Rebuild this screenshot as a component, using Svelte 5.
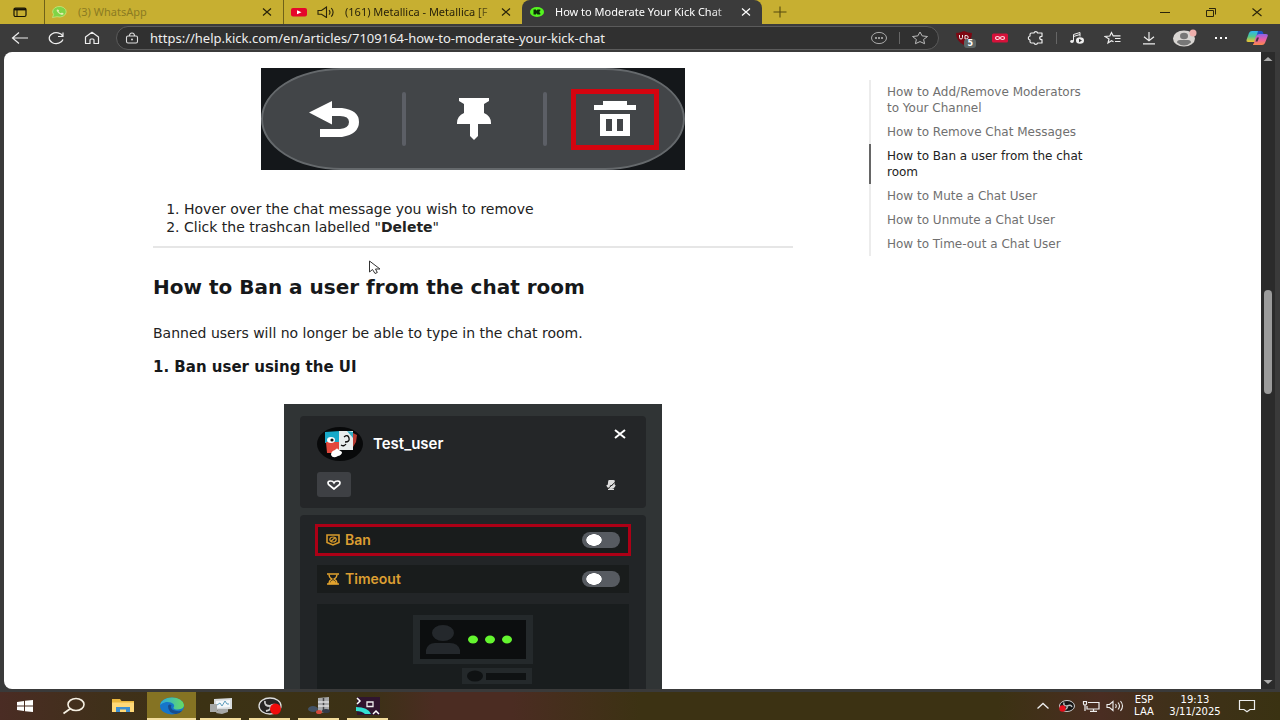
<script>
  const toc = [
    'How to Add/Remove Moderators to Your Channel',
    'How to Remove Chat Messages',
    'How to Ban a user from the chat room',
    'How to Mute a Chat User',
    'How to Unmute a Chat User',
    'How to Time-out a Chat User'
  ];
  const current = 2;
  let address = $state('https://help.kick.com/en/articles/7109164-how-to-moderate-your-kick-chat');
  let ban = $state(false);
  let timeout = $state(false);
</script>

{#snippet cross()}
  <svg width="10" height="8" viewBox="0 0 10 8"><path d="M1 .5 9 7.5M9 .5 1 7.5" fill="none" stroke="currentColor" stroke-width="1.2" /></svg>
{/snippet}

<div class="browser">
  <header>
    <div class="tabs">
      <button class="workspace" aria-label="Tab actions">
        <svg width="16" height="12" viewBox="0 0 16 12"><rect x="2" y="2" width="12" height="8.500" rx="1.500" fill="none" stroke="#171406" stroke-width="1.200" /><path d="M2 3.300h12" stroke="#171406" stroke-width="2.200" /><path d="M5 4v6" stroke="#171406" stroke-width="1" /></svg>
      </button>
      <div class="tab faded">
        <svg width="16" height="12" viewBox="0 0 16 12"><path d="M.5 11.500 1.600 8.500A6.800 5.300 0 1 1 5 10.700Z" fill="#7fd447" stroke="#c9e67c" stroke-width=".8" /><path d="M5 3.600c-1 .8.200 2.600 2 3.900 2 1.400 4 1.700 4.600.6.300-.8-1.600-1.600-2-1.300l-.7.500C7.800 7 7 6.200 6.600 5.500l.5-.7C7.400 4.400 6 3 5 3.600" fill="#e8efb4" /></svg>
        <span class="title">(3) WhatsApp</span>
        <button class="close" aria-label="Close WhatsApp">{@render cross()}</button>
      </div>
      <div class="tab">
        <svg width="16" height="12" viewBox="0 0 16 12"><rect y="2" width="16" height="8.500" rx="2" fill="#e5062b" /><path d="m6 4.300 4.500 2L6 8.300Z" fill="#fff" /></svg>
        <svg class="sound" width="18" height="12" viewBox="0 0 18 12"><path d="M1 4.500h3.500L9.500 1v10.500L4.500 8.300H1ZM12 4.200q2 2.200 0 4.400M14.300 2q3.600 4.300 0 8.600" fill="none" stroke="#29230a" stroke-width="1.100" /></svg>
        <span class="title fade">(161) Metallica - Metallica [F</span>
        <button class="close" aria-label="Close Metallica">{@render cross()}</button>
      </div>
      <div class="tab active">
        <svg width="16" height="12" viewBox="0 0 16 12"><ellipse cx="8" cy="6" rx="7" ry="5" fill="#55f51f" /><path d="M4.500 3.500h2.500v1.300l1.500-1.300h2.800V5L10 6l1.300 1v1.600H8.500L7 7.200v1.400H4.500Z" fill="#092b05" /></svg>
        <span class="title fade">How to Moderate Your Kick Chat</span>
        <button class="close" aria-label="Close Kick">{@render cross()}</button>
      </div>
      <button class="plus" aria-label="New tab">
        <svg width="14" height="12" viewBox="0 0 14 12"><path d="M7 .5v11M.5 6h13" stroke="#55490f" stroke-width="1.100" /></svg>
      </button>
      <div class="window">
        <button aria-label="Minimize"><svg width="12" height="10" viewBox="0 0 12 10"><path d="M1 5.500h10" stroke="#2b250b" /></svg></button>
        <button aria-label="Restore"><svg width="12" height="10" viewBox="0 0 12 10"><path d="M1.500 3.500h7v6h-7zM4 1.500h6.500v6" fill="none" stroke="#2b250b" /></svg></button>
        <button aria-label="Close"><svg width="12" height="10" viewBox="0 0 12 10"><path d="m1.500 1.500 9 7.500M10.500 1.500l-9 7.500" stroke="#2b250b" stroke-width="1.100" /></svg></button>
      </div>
    </div>

    <div class="toolbar">
      <button aria-label="Back"><svg width="18" height="14" viewBox="0 0 18 14"><path d="M17 7H2M8 1.500 1.500 7 8 12.500" fill="none" stroke="#eee" stroke-width="1.200" /></svg></button>
      <button aria-label="Reload"><svg width="18" height="14" viewBox="0 0 18 14"><path d="M15.800 5.300A7 5.400 0 1 0 16 8.500M16 1.500v4h-5" fill="none" stroke="#eee" stroke-width="1.200" /></svg></button>
      <button aria-label="Home"><svg width="18" height="14" viewBox="0 0 18 14"><path d="M2.500 6 9 1.300 15.500 6v6.500H11V9q0-1-1-1H8Q7 8 7 9v3.500H2.500Z" fill="none" stroke="#eee" stroke-width="1.200" stroke-linejoin="round" /></svg></button>
      <div class="address">
        <svg width="14" height="12" viewBox="0 0 14 12"><rect x="1.500" y="4" width="11" height="7" rx="1.500" fill="none" stroke="#ddd" stroke-width="1.100" /><path d="M4.500 4q0-3 2.500-3t2.500 3" fill="none" stroke="#ddd" stroke-width="1.100" /><circle cx="7" cy="7.500" r="1" fill="#ddd" /></svg>
        <input aria-label="Address" bind:value={address} />
        <button aria-label="Page info"><svg width="18" height="14" viewBox="0 0 18 14"><ellipse cx="9" cy="7" rx="7.500" ry="5.600" fill="none" stroke="#aaa" /><path d="M5 7h2M8 7h2M11 7h2" stroke="#bbb" stroke-width="1.500" /></svg></button>
        <i class="rule"></i>
        <button aria-label="Favorite"><svg width="18" height="14" viewBox="0 0 18 14"><path d="m9 1 2.200 3.900 5.300.6-3.900 3 1 4.200L9 10.600l-4.600 2.100 1-4.200-3.900-3 5.300-.6Z" fill="none" stroke="#bbb" stroke-linejoin="round" /></svg></button>
      </div>
      <div class="tools">
        <button aria-label="uBlock, 5 blocked" class="ublock"><svg width="18" height="14" viewBox="0 0 18 14"><path d="M9 0q3.500 2 8 2 0 8-8 12Q1 10 1 2q4.500 0 8-2" fill="#7d0712" /><path d="M4.500 4v2.500Q4.500 8 6 8t1.500-1.500V4M10 4.500h1.200q2 0 2 1.700t-2 1.800H10Z" fill="none" stroke="#eee" /></svg><b>5</b></button>
        <button aria-label="Recorder"><svg width="18" height="14" viewBox="0 0 18 14"><rect x="1" y="2.500" width="16" height="9" rx="1.500" fill="#d6113a" /><ellipse cx="6.500" cy="7" rx="2" ry="1.500" fill="none" stroke="#ffd9df" stroke-width="1.200" /><ellipse cx="11.500" cy="7" rx="2" ry="1.500" fill="none" stroke="#ffd9df" stroke-width="1.200" /></svg></button>
        <button aria-label="Extensions"><svg width="18" height="14" viewBox="0 0 18 14"><path d="M4.500 2H7q.3-1.300 1.800-1.300T10.600 2H15v3.300q-2.300 0-2.300 1.700T15 8.700V12h-4.400q-.3 1.300-1.800 1.300T7 12H4.500Q3 12 3 10.500V9Q1.300 8.600 1.300 7T3 5V3.500Q3 2 4.500 2" fill="none" stroke="#eee" stroke-width="1.200" stroke-linejoin="round" /></svg></button>
        <i class="rule short"></i>
        <button aria-label="Media"><svg width="18" height="14" viewBox="0 0 18 14"><path d="M5.500 10V3.500L12 1.500v4M5.500 5.500 12 3.500" fill="none" stroke="#eee" /><ellipse cx="4" cy="10.500" rx="1.800" ry="1.400" fill="#eee" /><ellipse cx="12" cy="9.500" rx="4" ry="3.300" fill="#eee" /><path d="m11 7.700 3 1.800-3 1.800Z" fill="#333" /></svg></button>
        <button aria-label="Favorites"><svg width="18" height="14" viewBox="0 0 18 14"><path d="M9.500 10.800 7.500 9.700 4 12l1-4-4-2.500 4.800-.5L7.500 1.500l1.700 3.400h7.300M11 7.500h5.500M11 10.500h5.500" fill="none" stroke="#eee" stroke-width="1.200" /></svg></button>
        <button aria-label="Downloads"><svg width="18" height="14" viewBox="0 0 18 14"><path d="M9 1v8.500M4 5.800 9 9.800l5-4M3 12.800h12" fill="none" stroke="#eee" stroke-width="1.200" /></svg></button>
        <button aria-label="Profile"><svg width="26" height="18" viewBox="0 0 26 18"><ellipse cx="12" cy="9.500" rx="11" ry="8" fill="#d8d5d2" /><ellipse cx="12" cy="7" rx="4" ry="3.200" fill="#777" /><path d="M5 13.500q0-2.500 3-2.500h8q3 0 3 2.500-3 3-7 3t-7-3" fill="#777" /><circle cx="21" cy="4" r="3.500" fill="#eeb0ad" /></svg></button>
        <button aria-label="Menu"><svg width="18" height="14" viewBox="0 0 18 14"><path d="M3 7h2M8 7h2M13 7h2" stroke="#fff" stroke-width="2" /></svg></button>
        <button aria-label="Copilot">
          <svg width="24" height="16" viewBox="0 0 24 16">
            <defs>
              <linearGradient id="cpA" x2="0" y2="1"><stop stop-color="#2cb5f0" /><stop offset=".5" stop-color="#52c88d" /><stop offset="1" stop-color="#f2c42d" /></linearGradient>
              <linearGradient id="cpB" x2="0" y2="1"><stop stop-color="#8d62e8" /><stop offset=".5" stop-color="#ea5da4" /><stop offset="1" stop-color="#f98a4a" /></linearGradient>
            </defs>
            <path d="M7 1h8q2 0 1.500 2L14 10q-.8 2-3 2H3q-2 0-1.500-2L4 3q.8-2 3-2" fill="url(#cpA)" />
            <path d="M14 4h7q2.300 0 1.700 2L20 13q-.8 2-3 2H9q-2 0 0-2l2-7q.8-2 3-2" fill="url(#cpB)" />
            <path d="M13 1h3q2 0 2.500 3H14q-2 0-2.500 2Z" fill="#1d52c8" /><path d="M12 7.500h2l-1.500 4h-2Z" fill="#43313d" />
          </svg>
        </button>
      </div>
    </div>
  </header>

  <div class="view">
    <main>
      <div class="columns">
        <article>
          <div class="actions">
            <div class="pill">
              <span><svg width="52" height="40" viewBox="0 0 52 40"><path d="M1 13.500 24 2v7h10q17 2 17 14T34 38H12v-8h20q9-1 9-7t-9-6h-8v8.500Z" fill="#fff" /></svg></span>
              <i></i>
              <span><svg width="36" height="44" viewBox="0 0 36 44"><path d="M3 1h30v3l-5 3v9q7 3 7 10v1H22v12l-4 4-4-4V27H1v-1q0-7 7-10V7L3 4Z" fill="#fff" /></svg></span>
              <i></i>
              <span class="marked"><svg width="44" height="36" viewBox="0 0 44 36"><path d="M10 0h24v4h9v5H1V4h9ZM7 13h30v22H7Zm6 5v12h6V18Zm11 0v12h6V18Z" fill="#fff" fill-rule="evenodd" /></svg></span>
            </div>
          </div>
          <ol>
            <li>Hover over the chat message you wish to remove</li>
            <li>Click the trashcan labelled "<strong>Delete</strong>"</li>
          </ol>
          <hr />
          <h2>How to Ban a user from the chat room</h2>
          <p>Banned users will no longer be able to type in the chat room.</p>
          <h3>1. Ban user using the UI</h3>

          <div class="card">
            <section class="user">
              <div class="line">
                <svg width="46" height="34" viewBox="0 0 46 34"><ellipse cx="23" cy="17" rx="23" ry="17" fill="#08090a" /><path d="m8 5 15-1v12H8Z" fill="#18a9c9" /><path d="M22 4h14v19H22Z" fill="#e9eeee" /><path d="M9 15h13v11H10Z" fill="#e2483c" /><path d="m36 6 4 2-1 7-3 5Z" fill="#b53b32" /><path d="m30 4 6 1v6Z" fill="#35b3c9" /><ellipse cx="14" cy="13" rx="4" ry="3" fill="#fff" /><path d="M27 10q4-3 5 1t-4 4M24 18q3 2 5-1" fill="none" stroke="#111" stroke-width="1.300" /><circle cx="15" cy="13" r="1.600" fill="#111" /><path d="M14 28q0-4 4-5 2-3 4 0l3 2q0 3-4 4-5 3-7-1" fill="#fff" /></svg>
                <strong>Test_user</strong>
                <button class="x" aria-label="Close user card"><svg width="12" height="10" viewBox="0 0 12 10"><path d="m1 1 10 8M11 1 1 9" stroke="#fff" stroke-width="2" /></svg></button>
              </div>
              <div class="line second">
                <button class="heart" aria-label="Follow"><svg width="14" height="10" viewBox="0 0 14 10"><path d="M7 9 1.500 4.500Q0 1 3.500 1 6 1 7 2.800 8 1 10.500 1 14 1 12.500 4.500Z" fill="none" stroke="#fff" stroke-width="1.700" /></svg></button>
                <svg class="mic" width="12" height="10" viewBox="0 0 12 10"><path d="M4 1q2-1.300 5 0V5Q6 8 3.500 5ZM2 5q1 3 4 3t4-3M3 9.500h6" fill="#ddd" stroke="#ddd" stroke-width="1.500" /><path d="M11 1.500 2 9.500" stroke="#222" /></svg>
              </div>
            </section>
            <section class="mod">
              <label class="row outlined">
                <svg width="14" height="12" viewBox="0 0 14 12"><path d="M1 1h12v7.500L7 11 1 8.500Z" fill="none" stroke="#d79a2b" stroke-width="1.600" /><ellipse cx="7" cy="5.500" rx="3.200" ry="2.500" fill="none" stroke="#d79a2b" stroke-width="1.200" /><path d="m9 3.800-4 3.500" stroke="#d79a2b" stroke-width="1.200" /></svg>
                <span>Ban</span><input type="checkbox" bind:checked={ban} />
              </label>
              <label class="row">
                <svg width="14" height="12" viewBox="0 0 14 12"><path d="M1 1h12M1 11h12" stroke="#e2a32e" stroke-width="1.600" /><path d="M3 1.500q0 3 3 4.500-3 1.500-3 4.500h8Q11 7.500 8 6q3-1.500 3-4.500" fill="none" stroke="#e2a32e" stroke-width="1.300" /><path d="M4 10q0-2 3-3 3 1 3 3Z" fill="#e2a32e" /></svg>
                <span>Timeout</span><input type="checkbox" bind:checked={timeout} />
              </label>
              <div class="scene">
                <svg width="120" height="72" viewBox="0 0 120 72"><path fill="#24292b" d="M0 0h120v49H0zM49 53h70v16H49z" /><path fill="#0c0e0f" d="M7 5h106v39H7z" /><ellipse cx="30" cy="18" rx="11" ry="8" fill="#24282c" /><path d="M13 39v-4q2-7 9-7h15q8 0 10 7v4Z" fill="#24282c" /><g fill="#64f52f"><ellipse cx="60" cy="24.500" rx="5" ry="4" /><ellipse cx="77" cy="24.500" rx="5" ry="4" /><ellipse cx="94" cy="24.500" rx="5" ry="4" /></g><ellipse cx="62" cy="61" rx="8" ry="5.500" fill="#0f1213" /><path fill="#0f1213" d="M73 58h40v7H73z" /></svg>
              </div>
            </section>
          </div>
        </article>
        <nav aria-label="On this page">
          {#each toc as entry, i}
            <a href="#s{i}" class:current={i === current}>{entry}</a>
          {/each}
        </nav>
      </div>
    </main>
    <div class="scroll">
      <svg width="10" height="6" viewBox="0 0 10 6"><path d="m5 1 4.500 4h-9Z" fill="#aaa" /></svg>
      <div class="track"><i></i></div>
      <svg width="10" height="6" viewBox="0 0 10 6"><path d="M5 5 .5 1h9Z" fill="#aaa" /></svg>
    </div>
    <svg class="pointer" width="14" height="16" viewBox="0 0 14 16"><path d="M1.500 1v11l3-2.500 2.500 4 2.300-1L7.500 9H12Z" fill="#fff" stroke="#333" /></svg>
  </div>

  <footer>
    <button aria-label="Start"><svg width="16" height="12" viewBox="0 0 16 12"><path d="M0 2 7 1v4.600H0ZM8 .8 16 0v5.600H8ZM0 6.500h7V11l-7-1ZM8 6.500h8V12l-8-.8Z" fill="#fff" /></svg></button>
    <button aria-label="Search"><svg width="24" height="18" viewBox="0 0 24 18"><ellipse cx="14" cy="7.500" rx="8" ry="6" fill="none" stroke="#f5efe2" stroke-width="1.600" /><path d="M8.500 11.500 1.500 16.500" stroke="#f5efe2" stroke-width="1.800" /></svg></button>
    <button aria-label="Files"><svg width="22" height="16" viewBox="0 0 22 16"><path d="M0 1h8l1.500 2H22v11H0Z" fill="#eab73e" /><path d="M0 4.500h22V14H0Z" fill="#ffd978" /><path d="M4 14V9h14v5h-4v-2.500H8V14Z" fill="#3d8fd0" /></svg></button>
    <button class="open focused" aria-label="Edge">
      <svg width="24" height="18" viewBox="0 0 24 18">
        <defs><linearGradient id="edG"><stop stop-color="#2aa9df" /><stop offset="1" stop-color="#67dc62" /></linearGradient></defs>
        <ellipse cx="12" cy="9" rx="12" ry="8.500" fill="#1675c9" /><path d="M0 8Q2 .5 12 .5T24 8q0 4-6 4.500-5 0-4.500-2Q15 9 13.500 7 11 4.500 6 5 2 6 0 8" fill="url(#edG)" /><path d="M8 9q0 7 8 8 4-.5 6.500-3.500-5 1.500-9.500-.5-3-2-1.500-5Q8.500 6.500 8 9" fill="#164c8e" />
      </svg>
    </button>
    <button class="open" aria-label="System monitor"><svg width="24" height="18" viewBox="0 0 24 18"><path d="M5 2 23 1v11L5 13Z" fill="#d8dcde" /><path d="M7 4 21 3v7L7 11Z" fill="#f4f8fa" /><path d="m8 8 3-2 2 3 3-5 2 3h2" fill="none" stroke="#5f9dbb" /><path d="M1 7h7v8H1ZM9 12h10v3l-6 2-6-1Z" fill="#a7a9a8" /></svg></button>
    <button class="open" aria-label="OBS"><svg width="24" height="18" viewBox="0 0 24 18"><ellipse cx="12" cy="9" rx="11" ry="8" fill="#272525" stroke="#ddd" stroke-width="1.300" /><path d="M12 9q-6 0-5-5M12 9q5-3 7 1M12 9q2 4-4 5" fill="none" stroke="#ccc" stroke-width="1.800" /><circle cx="17.500" cy="12" r="5.500" fill="#ef0b0b" /></svg></button>
    <button class="open" aria-label="Mixer"><svg width="24" height="18" viewBox="0 0 24 18"><path d="m11 1 11-1v15l-11 1Z" fill="#a5a7a8" /><path d="M16.500 1v14" stroke="#444" stroke-width="1.500" /><path d="M11 5h11M11 9h11" stroke="#ddd" stroke-width="1.500" /><ellipse cx="6" cy="12" rx="5" ry="3" fill="#435264" /><ellipse cx="12" cy="15" rx="3" ry="2" fill="#d64a3c" /><ellipse cx="19" cy="14" rx="4" ry="2" fill="#333b47" /></svg></button>
    <button class="open" aria-label="Capture"><svg width="24" height="18" viewBox="0 0 24 18"><path fill="#30152f" d="M1 0h23v18H1z" /><path d="M0 10q12 0 15 7H9q-3-3-9-3Z" fill="#34e0d2" /><path d="m1 1 3 3-3 3M17 17l3-3 3 3" fill="none" stroke="#fff" stroke-width="1.500" /><path d="M11 5h6v4.500h-6z" fill="none" stroke="#eee" stroke-width="1.300" /></svg></button>
    <div class="tray">
      <button aria-label="Hidden icons"><svg width="16" height="12" viewBox="0 0 16 12"><path d="m2.500 8.500 5.500-5 5.500 5" fill="none" stroke="#eee" stroke-width="1.300" /></svg></button>
      <button aria-label="OBS status"><svg width="16" height="12" viewBox="0 0 16 12"><ellipse cx="8" cy="6" rx="7.500" ry="5.500" fill="#151515" stroke="#ccc" /><path d="M8 6Q4 6 5 2.500M8 6q4-2 5 1M8 6q1 3-3 3.500" fill="none" stroke="#bbb" stroke-width="1.500" /><circle cx="3.500" cy="8.500" r="3.200" fill="#e60f1c" /></svg></button>
      <button aria-label="Network"><svg width="18" height="12" viewBox="0 0 18 12"><path d="M6 2.500h11v6.500H5V6M8 11.300h7M11.500 9v2M1.500 1v3q0 1 1.500 1t1.500-1V1M1 1.500h4M3 5v6" fill="none" stroke="#eee" stroke-width="1.200" /></svg></button>
      <button aria-label="Volume"><svg width="18" height="12" viewBox="0 0 18 12"><path d="M1 4.500h2.500L7 1.500v9L3.500 7.500H1ZM9.500 4q1.500 2 0 4M12 2.500q3 3.500 0 7M14.500 1q4 5 0 10" fill="none" stroke="#eee" stroke-width="1.100" /></svg></button>
      <div class="stack lang"><span>ESP</span><span>LAA</span></div>
      <div class="stack clock"><span>19:13</span><span>3/11/2025</span></div>
      <button aria-label="Notifications" class="note"><svg width="18" height="14" viewBox="0 0 18 14"><path d="M1.500 1.500h15v9H12l-3 2.300-3-2.300H1.500Z" fill="none" stroke="#eee" stroke-width="1.200" /></svg></button>
    </div>
  </footer>
</div>

<style>
  :global(body) { margin: 0; }
  .browser { display: flex; flex-direction: column; height: 100vh; overflow: hidden; background: #3a3a3a; font-family: "DejaVu Sans", sans-serif; color: #222; }
  .browser * { box-sizing: border-box; }
  svg { display: block; flex: none; }
  button { display: flex; align-items: center; justify-content: center; padding: 0; border: 0; background: none; color: inherit; font: inherit; }

  .tabs { display: flex; height: 24px; background: #c7af31; color: #29230a; font-family: "Noto Sans", sans-serif; font-size: 11px; }
  .workspace { width: 40px; margin-right: 4px; }
  .tab { display: flex; align-items: center; flex: 0 1 239px; min-width: 0; padding: 0 10px 0 7px; border-left: 1px solid #6f6119; }
  .tab.faded .title { color: #8b7b22; }
  .tab.active { border: 0; border-radius: 8px 8px 0 0; background: #3b3b3b; color: #fff; flex-basis: 240px; }
  .title { flex: 1; min-width: 0; margin-left: 10px; overflow: hidden; white-space: nowrap; line-height: 16px; }
  .fade { mask-image: linear-gradient(to right, #000 88%, rgb(0 0 0 / 30%)); }
  .sound { margin-left: 10px; }
  .close { width: 12px; margin-left: 8px; }
  .plus { width: 36px; }
  .window { display: flex; margin-left: auto; }
  .window button { width: 46px; }

  .toolbar { display: flex; align-items: center; height: 28px; padding: 0 5px 0 2px; background: #3b3b3b; }
  .toolbar > button { width: 36px; }
  .address { display: flex; flex: 1; align-items: center; min-width: 0; height: 24px; margin-left: 6px; padding: 0 6px 0 8px; border: 1px solid #5b5b5b; border-radius: 12px; background: #303030; }
  .address input { flex: 1; min-width: 0; margin-left: 11px; padding: 0; border: 0; outline: 0; background: none; color: #eee; font: 13px/20px "Noto Sans", sans-serif; }
  .address button { width: 24px; }
  .rule { width: 1px; height: 12px; margin: 0 8px; background: #666; }
  .rule.short { margin: 0 2px; }
  .tools { display: flex; align-items: center; margin-left: 7px; }
  .tools button { width: 36px; }
  .ublock { position: relative; }
  .ublock b { position: absolute; right: 6px; bottom: -3px; padding: 0 3px; border-radius: 3px; background: #5d6665; color: #fff; font-size: 8px; line-height: 9px; }

  .view { position: relative; display: flex; flex: 1; min-height: 0; padding: 0 5px 0 4px; margin-bottom: 3px; }
  main { flex: 1; min-width: 0; overflow: hidden; border-radius: 8px 0 0 8px; background: #fff; }
  .columns { display: grid; grid-template-columns: minmax(0, 640px) 243px; gap: 76px; justify-content: center; }
  article { display: flex; flex-direction: column; padding-top: 16px; font-size: 14px; line-height: 18px; }
  .actions { align-self: center; width: 424px; max-width: 100%; background: #14171a; }
  .pill { display: grid; grid-template-columns: 1fr 4px 1fr 4px 1fr; align-items: center; height: 102px; padding-left: 3px; border: 2px solid #65696c; border-radius: 80px / 51px; background: #424548; }
  .pill span { display: flex; align-items: center; justify-content: center; }
  .pill i { height: 54px; border-radius: 2px; background: #5c5f66; }
  .pill .marked { justify-self: center; width: 88px; height: 61px; border: 5px solid #d5040f; }
  ol { margin: 30px 0 10px; padding-left: 31px; }
  hr { width: 100%; height: 2px; margin: 0; border: 0; background: #e6e6e6; }
  h2 { margin: 27px 0 0; font-size: 20px; line-height: 24px; color: #16181a; }
  p { margin: 24px 0 0; line-height: 20px; }
  h3 { margin: 14px 0 27px; font-size: 15px; line-height: 20px; color: #16181a; }

  .card { display: flex; flex-direction: column; gap: 7px; align-self: center; width: 378px; max-width: 100%; padding: 12px 16px 0; background: #303435; color: #fff; font-family: Inter, sans-serif; }
  .user { height: 92px; padding: 11px 17px; border-radius: 4px; background: #242628; }
  .line { display: flex; align-items: center; }
  .line strong { margin-left: 10px; font-size: 15px; font-weight: 600; }
  .x { align-self: flex-start; margin: 2px 3px 0 auto; }
  .second { margin-top: 11px; }
  .heart { width: 34px; height: 25px; border-radius: 3px; background: #3e4044; }
  .mic { margin: 0 12px 0 auto; }
  .mod { padding: 9px 15px 0; border-radius: 4px 4px 0 0; background: #222527; }
  .row { display: flex; align-items: center; height: 28px; margin: 9px 2px 0; padding: 0 9px; background: #191c1c; color: #dc9e32; font-size: 14px; font-weight: 600; }
  .row.outlined { height: 32px; margin: 0; border: 3px solid #ad0016; padding: 0 8px; }
  .row span { margin-left: 5px; }
  .row input { appearance: none; width: 38px; height: 16px; margin: 0 0 0 auto; border-radius: 8px; background: radial-gradient(ellipse 8px 6px at 12px 8px, #fff 92%, transparent) #575b61; }
  .row input:checked { background: radial-gradient(ellipse 8px 6px at 26px 8px, #fff 92%, transparent) #4fae2c; }
  .scene { display: flex; justify-content: center; margin: 11px 2px 0; padding: 11px 0 8px; background: #191d1e; }

  nav { margin-top: 28px; align-self: start; font-size: 12px; line-height: 16px; }
  nav a { display: block; padding: 4px 24px 4px 16px; border-left: 2px solid #ececec; color: #707070; text-decoration: none; }
  nav a.current { border-color: #666; color: #222; }

  .scroll { display: flex; flex-direction: column; align-items: center; width: 14px; padding: 4px 0; background: #2b2b2b; }
  .track { flex: 1; width: 8px; padding-top: 228px; }
  .track i { display: block; height: 104px; border-radius: 4px; background: #9b9b9b; }
  .pointer { position: absolute; left: 368px; top: 208px; }

  footer { display: flex; height: 28px; background: linear-gradient(90deg, #4a2c24, #40301a 8%, #3c3214 16%, #3c3116 29%, #4b2c22 34%, #4b2c22 40%, #3c3213 50%, #3c3213 78%, #4a2d22 86%, #40301a 91%, #3a3212); color: #fff; }
  footer > button { width: 49px; }
  .open { position: relative; }
  .open::after { content: ""; position: absolute; right: 4px; bottom: 0; left: 4px; height: 2px; background: #f3dd9c; }
  .focused { background: #857323; }
  .focused::after { right: 0; left: 0; }
  .tray { display: flex; align-items: center; margin-left: auto; padding-right: 21px; }
  .tray button { width: 24px; }
  .stack { display: flex; flex-direction: column; align-items: center; font-size: 10px; line-height: 12px; }
  .lang { width: 34px; }
  .clock { width: 68px; }
  .note { margin-left: 6px; }
</style>
